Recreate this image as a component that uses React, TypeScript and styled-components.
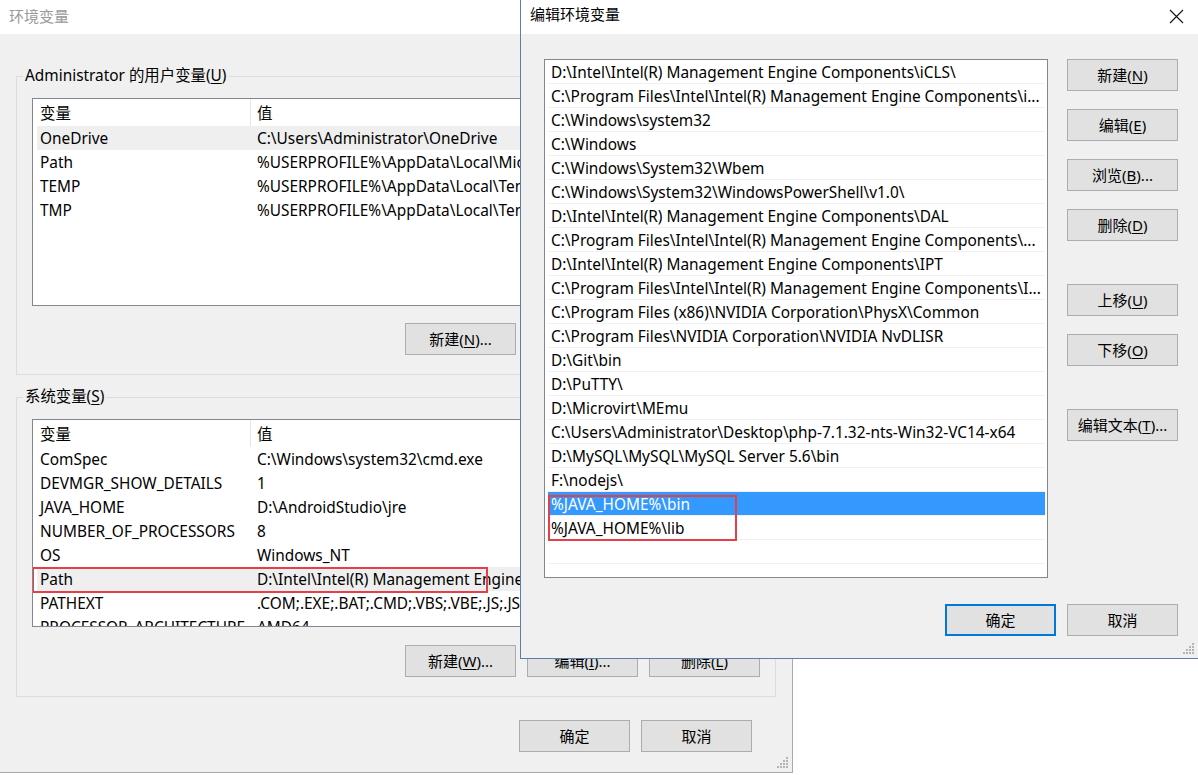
import React from "react";
import styled, { createGlobalStyle } from "styled-components";

const GlobalStyle = createGlobalStyle`
  body {
    margin: 0;
    background: #ffffff;
    font-family: "Noto Sans", "Noto Sans CJK SC", sans-serif;
    color: #000;
  }
  * { box-sizing: border-box; }
`;

const Desktop = styled.div`
  position: relative;
  width: 1198px;
  height: 775px;
  overflow: hidden;
  background: #ffffff;
`;

interface WindowProps {
  $left: number;
  $width: number;
  $height: number;
  $active?: boolean;
}

const Window = styled.div<WindowProps>`
  position: absolute;
  top: -1px;
  left: ${(p) => p.$left}px;
  width: ${(p) => p.$width}px;
  height: ${(p) => p.$height}px;
  display: flex;
  flex-direction: column;
  background: #f0f0f0;
  border: 1px solid ${(p) => (p.$active ? "#5a7db4" : "#a9a9a9")};
`;

const TitleBar = styled.div<{ $active?: boolean }>`
  height: 34px;
  flex: none;
  display: flex;
  align-items: center;
  justify-content: space-between;
  padding: 0 14px ${(p) => (p.$active ? 8 : 4)}px 9px;
  background: #ffffff;
  font-size: 15px;
  color: ${(p) => (p.$active ? "#000" : "#9a9a9a")};
`;

const CloseIcon = styled.svg`
  width: 15px;
  height: 15px;
  margin-top: 6px;
`;

const BackBody = styled.div`
  flex: 1;
  display: flex;
  flex-direction: column;
  padding: 32px 16px 0 16px;
`;

const Group = styled.fieldset<{ $top: number }>`
  margin: ${(p) => p.$top}px 0 0 0;
  min-width: 0;
  border: 1px solid #dcdcdc;
  padding: 12px 15px 19px 15px;
`;

const Legend = styled.legend`
  margin-left: -9px;
  padding: 0 2px;
  font-size: 15.4px;
  line-height: 20px;
`;

const Key = styled.span`
  text-decoration: underline;
  text-underline-offset: 2px;
`;

const VarList = styled.div<{ $height: number }>`
  height: ${(p) => p.$height}px;
  background: #ffffff;
  border: 1px solid #828790;
  overflow: hidden;
  font-size: 15.4px;
`;

const VarHeader = styled.div`
  display: grid;
  grid-template-columns: 217px 1fr;
  height: 27px;
  align-items: center;
`;

const HeaderCell = styled.div`
  height: 100%;
  display: flex;
  align-items: center;
  padding-left: 7px;
  & + & {
    border-left: 1px solid #e5e5e5;
    padding-left: 6px;
  }
`;

const VarRow = styled.div<{ $hot?: boolean }>`
  position: relative;
  display: grid;
  grid-template-columns: 213px 1fr;
  height: 24px;
  line-height: 25px;
  margin-left: 4px;
  background: ${(p) => (p.$hot ? "#efefef" : "transparent")};
  white-space: nowrap;
`;

const NameCell = styled.div`
  padding-left: 3px;
  overflow: hidden;
`;

const ValueCell = styled.div`
  padding-left: 7px;
  overflow: hidden;
`;

const RedFrame = styled.div<{ $l: number; $t: number; $w: number; $h: number }>`
  position: absolute;
  left: ${(p) => p.$l}px;
  top: ${(p) => p.$t}px;
  width: ${(p) => p.$w}px;
  height: ${(p) => p.$h}px;
  border: 2px solid #e5404a;
  pointer-events: none;
`;

const ButtonRow = styled.div<{ $top: number; $right?: number }>`
  display: flex;
  justify-content: flex-end;
  gap: 11px;
  margin-top: ${(p) => p.$top}px;
  margin-right: ${(p) => p.$right || 0}px;
`;

const Button = styled.button<{ $default?: boolean; $top?: number; $ghost?: boolean }>`
  width: 111px;
  height: 32px;
  flex: none;
  margin-top: ${(p) => p.$top || 0}px;
  padding: 0 0 1px;
  background: #e1e1e1;
  border: ${(p) => (p.$default ? "2px solid #0078d7" : "1px solid #adadad")};
  font-family: inherit;
  font-size: 15px;
  color: #000;
  visibility: ${(p) => (p.$ghost ? "hidden" : "visible")};
`;

const FrontBody = styled.div`
  flex: 1;
  display: flex;
  flex-direction: column;
  padding: 25px 20px 0 23px;
`;

const MainRow = styled.div`
  display: flex;
  gap: 19px;
`;

const PathList = styled.div`
  width: 504px;
  height: 519px;
  flex: none;
  background: #ffffff;
  border: 1px solid #828790;
  padding: 0 1px;
  overflow: hidden;
  font-size: 15.4px;
`;

const PathRow = styled.div<{ $selected?: boolean }>`
  height: 24px;
  line-height: 25px;
  padding: 0 4px 0 3px;
  margin: 0 1px 0 2px;
  border-bottom: 1px solid #f0f0f0;
  white-space: nowrap;
  overflow: hidden;
  text-overflow: ellipsis;
  background: ${(p) => (p.$selected ? "#3399ff" : "transparent")};
  color: ${(p) => (p.$selected ? "#ffffff" : "#000")};
`;

const Marked = styled.div`
  position: relative;
`;

const SideButtons = styled.div`
  display: flex;
  flex-direction: column;
`;

const Grip = styled.svg`
  position: absolute;
  right: 3px;
  bottom: 3px;
  width: 12px;
  height: 12px;
`;

const userVars: [string, string][] = [
  ["OneDrive", "C:\\Users\\Administrator\\OneDrive"],
  ["Path", "%USERPROFILE%\\AppData\\Local\\Microsoft\\WindowsApps;"],
  ["TEMP", "%USERPROFILE%\\AppData\\Local\\Temp"],
  ["TMP", "%USERPROFILE%\\AppData\\Local\\Temp"],
];

const sysVars: [string, string][] = [
  ["ComSpec", "C:\\Windows\\system32\\cmd.exe"],
  ["DEVMGR_SHOW_DETAILS", "1"],
  ["JAVA_HOME", "D:\\AndroidStudio\\jre"],
  ["NUMBER_OF_PROCESSORS", "8"],
  ["OS", "Windows_NT"],
  ["Path", "D:\\Intel\\Intel(R) Management Engine Components\\iCLS\\;"],
  ["PATHEXT", ".COM;.EXE;.BAT;.CMD;.VBS;.VBE;.JS;.JSE;.WSF;.WSH;.MSC"],
  ["PROCESSOR_ARCHITECTURE", "AMD64"],
];

const paths = [
  "D:\\Intel\\Intel(R) Management Engine Components\\iCLS\\",
  "C:\\Program Files\\Intel\\Intel(R) Management Engine Components\\i...",
  "C:\\Windows\\system32",
  "C:\\Windows",
  "C:\\Windows\\System32\\Wbem",
  "C:\\Windows\\System32\\WindowsPowerShell\\v1.0\\",
  "D:\\Intel\\Intel(R) Management Engine Components\\DAL",
  "C:\\Program Files\\Intel\\Intel(R) Management Engine Components\\...",
  "D:\\Intel\\Intel(R) Management Engine Components\\IPT",
  "C:\\Program Files\\Intel\\Intel(R) Management Engine Components\\I...",
  "C:\\Program Files (x86)\\NVIDIA Corporation\\PhysX\\Common",
  "C:\\Program Files\\NVIDIA Corporation\\NVIDIA NvDLISR",
  "D:\\Git\\bin",
  "D:\\PuTTY\\",
  "D:\\Microvirt\\MEmu",
  "C:\\Users\\Administrator\\Desktop\\php-7.1.32-nts-Win32-VC14-x64",
  "D:\\MySQL\\MySQL\\MySQL Server 5.6\\bin",
  "F:\\nodejs\\",
];

const ResizeGrip = () => (
  <Grip viewBox="0 0 12 12">
    {[
      [9, 0],
      [6, 3],
      [9, 3],
      [3, 6],
      [6, 6],
      [9, 6],
      [0, 9],
      [3, 9],
      [6, 9],
      [9, 9],
    ].map(([x, y]) => (
      <rect key={`${x}-${y}`} x={x} y={y} width="2" height="2" fill="#b4b4b4" />
    ))}
  </Grip>
);

const VarTable: React.FC<{
  rows: [string, string][];
  height: number;
  hot: string;
  framed?: boolean;
}> = ({ rows, height, hot, framed }) => (
  <VarList $height={height}>
    <VarHeader>
      <HeaderCell>变量</HeaderCell>
      <HeaderCell>值</HeaderCell>
    </VarHeader>
    {rows.map(([name, value]) => (
      <VarRow key={name} $hot={name === hot}>
        <NameCell>{name}</NameCell>
        <ValueCell>{value}</ValueCell>
        {framed && name === hot && <RedFrame $l={-5} $t={0} $w={456} $h={26} />}
      </VarRow>
    ))}
  </VarList>
);

const App: React.FC = () => {
  return (
    <>
      <GlobalStyle />
      <Desktop>
        <Window $left={-1} $width={794} $height={774}>
          <TitleBar>环境变量</TitleBar>
          <BackBody>
            <Group $top={0}>
              <Legend>
                Administrator 的用户变量(<Key>U</Key>)
              </Legend>
              <VarTable rows={userVars} height={208} hot="OneDrive" />
              <ButtonRow $top={17}>
                <Button>
                  新建(<Key>N</Key>)...
                </Button>
                <Button $ghost>编辑(E)...</Button>
                <Button $ghost>删除(D)</Button>
              </ButtonRow>
            </Group>
            <Group $top={12}>
              <Legend>
                系统变量(<Key>S</Key>)
              </Legend>
              <VarTable rows={sysVars} height={208} hot="Path" framed />
              <ButtonRow $top={18}>
                <Button>
                  新建(<Key>W</Key>)...
                </Button>
                <Button>
                  编辑(<Key>I</Key>)...
                </Button>
                <Button>
                  删除(<Key>L</Key>)
                </Button>
              </ButtonRow>
            </Group>
            <ButtonRow $top={23} $right={24}>
              <Button>确定</Button>
              <Button>取消</Button>
            </ButtonRow>
          </BackBody>
          <ResizeGrip />
        </Window>

        <Window $left={520} $width={679} $height={660} $active>
          <TitleBar $active>
            编辑环境变量
            <CloseIcon viewBox="0 0 15 15">
              <path d="M1 1 L14 14 M14 1 L1 14" stroke="#111" strokeWidth="1.1" fill="none" />
            </CloseIcon>
          </TitleBar>
          <FrontBody>
            <MainRow>
              <PathList>
                {paths.map((p) => (
                  <PathRow key={p}>{p}</PathRow>
                ))}
                <Marked>
                  <PathRow $selected>%JAVA_HOME%\bin</PathRow>
                  <PathRow>%JAVA_HOME%\lib</PathRow>
                  <RedFrame $l={2} $t={3} $w={189} $h={46} />
                </Marked>
                <PathRow />
                <PathRow />
              </PathList>
              <SideButtons>
                <Button>
                  新建(<Key>N</Key>)
                </Button>
                <Button $top={18}>
                  编辑(<Key>E</Key>)
                </Button>
                <Button $top={18}>
                  浏览(<Key>B</Key>)...
                </Button>
                <Button $top={18}>
                  删除(<Key>D</Key>)
                </Button>
                <Button $top={43}>
                  上移(<Key>U</Key>)
                </Button>
                <Button $top={18}>
                  下移(<Key>O</Key>)
                </Button>
                <Button $top={43}>
                  编辑文本(<Key>T</Key>)...
                </Button>
              </SideButtons>
            </MainRow>
            <ButtonRow $top={26}>
              <Button $default>确定</Button>
              <Button>取消</Button>
            </ButtonRow>
          </FrontBody>
          <ResizeGrip />
        </Window>
      </Desktop>
    </>
  );
};

export default App;
